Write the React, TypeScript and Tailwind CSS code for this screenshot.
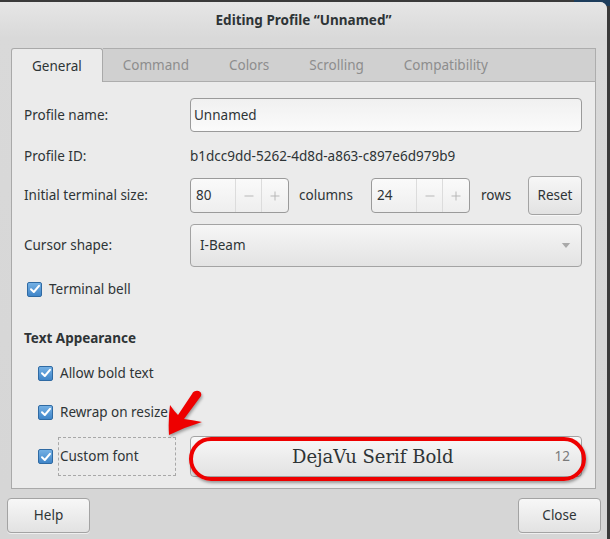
import { Minus, Plus } from "lucide-react";

const font = "font-['Noto_Sans',_'DejaVu_Sans',_sans-serif]";

const Check = ({ className = "" }: { className?: string }) => (
  <span
    className={`flex h-[15px] w-[15px] items-center justify-center rounded-[2px] border border-[#2f6aa3] bg-gradient-to-b from-[#74b0e4] to-[#3f85c8] ${className}`}
  >
    <svg viewBox="0 0 12 12" className="h-[12px] w-[12px]">
      <path d="M2 6.2 L4.8 9 L10 2.8" fill="none" stroke="#fff" strokeWidth="2" strokeLinecap="round" strokeLinejoin="round" />
    </svg>
  </span>
);

const SpinBox = ({ value }: { value: string }) => (
  <div className="flex h-[35px] w-[99px] rounded-[4px] border border-[#9a9a9a] bg-gradient-to-b from-[#fafafa] to-[#eeeeee]">
    <div className="flex w-[44px] items-center pl-[5px] text-[#2e3436]">{value}</div>
    <div className="flex w-[26px] items-center justify-center border-l border-[#dcdcdc] text-[#b4b4b4]">
      <Minus className="h-[14px] w-[14px]" strokeWidth={1.6} />
    </div>
    <div className="flex flex-1 items-center justify-center border-l border-[#dcdcdc] text-[#b4b4b4]">
      <Plus className="h-[14px] w-[14px]" strokeWidth={1.6} />
    </div>
  </div>
);

const Button = ({ label, className = "" }: { label: string; className?: string }) => (
  <div
    className={`flex items-center justify-center rounded-[4px] border border-[#a3a3a3] bg-gradient-to-b from-[#f7f7f7] to-[#e2e2e2] text-[13.5px] text-[#2e3436] shadow-[0_1px_0_rgba(255,255,255,0.6)] ${className}`}
  >
    {label}
  </div>
);

export default function App() {
  const tabs = ["Command", "Colors", "Scrolling", "Compatibility"];

  return (
    <div className={`relative h-[539px] w-[610px] overflow-hidden bg-[#3a3a3a] ${font}`}>
      {/* desktop behind the corner */}
      <div className="absolute right-0 top-0 h-[6px] w-[36px] bg-[#1d3d5c]" />

      <div className="relative mt-[2px] flex h-[537px] w-[607px] flex-col rounded-tr-[7px] bg-[#d6d6d6]">
        {/* Title bar */}
        <div className="flex h-[36px] items-center justify-center rounded-tr-[7px] bg-gradient-to-b from-[#e6e6e6] to-[#d9d9d9] text-[13.5px] font-bold text-[#2e3436]">
          Editing Profile “Unnamed”
        </div>

        {/* Notebook */}
        <div className="flex flex-col bg-gradient-to-b from-[#d9d9d9] to-[#d6d6d6] px-[11px] pt-[10px]">
          <div className="flex h-[34px]">
            <div className="flex items-center rounded-t-[3px] border-l border-r border-t border-[#a9a9a9] bg-[#ebebeb] px-5 pt-[2px] text-[13.5px] text-[#2e3436]">
              General
            </div>
            <div className="flex flex-1 border-b border-r border-t border-[#adadad] bg-[#d0d0d0]">
              {tabs.map((t) => (
                <div key={t} className="flex items-center px-5 pt-[1px] text-[13.5px] text-[#8d8d8d]">
                  {t}
                </div>
              ))}
            </div>
          </div>

          <div className="relative flex h-[407px] flex-col border-b border-l border-r border-[#a9a9a9] bg-[#ebebeb] pl-[12px] pr-[13px] text-[13.5px] text-[#2e3436]">
            {/* Profile name */}
            <div className="mt-[16px] flex h-[34px] items-center">
              <div className="w-[166px]">Profile name:</div>
              <div className="flex h-[34px] flex-1 items-center rounded-[4px] border border-[#9a9a9a] bg-gradient-to-b from-[#f0f0f0] to-[#fbfbfb] pl-[3px]">
                Unnamed
              </div>
            </div>

            {/* Profile ID */}
            <div className="mt-[7px] flex h-[34px] items-center">
              <div className="w-[166px]">Profile ID:</div>
              <div>b1dcc9dd-5262-4d8d-a863-c897e6d979b9</div>
            </div>

            {/* Initial size */}
            <div className="mt-[3px] flex h-[39px] items-center">
              <div className="w-[166px]">Initial terminal size:</div>
              <SpinBox value="80" />
              <div className="ml-[10px] w-[72px]">columns</div>
              <SpinBox value="24" />
              <div className="ml-[11px]">rows</div>
              <Button label="Reset" className="ml-auto h-[39px] w-[54px]" />
            </div>

            {/* Cursor shape */}
            <div className="mt-[9px] flex h-[43px] items-center">
              <div className="w-[166px]">Cursor shape:</div>
              <div className="flex h-[43px] flex-1 items-center justify-between rounded-[4px] border border-[#a3a3a3] bg-gradient-to-b from-[#f6f6f6] to-[#e3e3e3] pl-[9px] pr-[10px]">
                <span>I-Beam</span>
                <svg viewBox="0 0 10 6" className="h-[5px] w-[10px]">
                  <path d="M0 0 L10 0 L5 6 Z" fill="#a9a9a9" />
                </svg>
              </div>
            </div>

            {/* Terminal bell */}
            <div className="mt-[12px] flex h-[20px] items-center gap-[7px] pl-[3px]">
              <Check />
              <span>Terminal bell</span>
            </div>

            {/* Text appearance */}
            <div className="mt-[29px] flex h-[20px] items-center font-bold">Text Appearance</div>

            <div className="mt-[15px] flex h-[20px] items-center gap-[7px] pl-[14px]">
              <Check />
              <span>Allow bold text</span>
            </div>

            <div className="mt-[19px] flex h-[20px] items-center gap-[7px] pl-[14px]">
              <Check />
              <span>Rewrap on resize</span>
            </div>

            <div className="mt-[14px] flex h-[41px] items-center pl-[14px]">
              <Check />
              <div className="ml-[5px] flex h-[39px] w-[118px] items-center border border-dashed border-[#a8a8a8] pl-[1px]">
                Custom font
              </div>
              <div className="ml-[14px] flex h-[41px] flex-1 items-center rounded-[4px] border border-[#a3a3a3] bg-gradient-to-b from-[#f8f8f8] to-[#e2e2e2]">
                <span className="flex-1 text-center font-['DejaVu_Serif',_serif] text-[18px] text-[#2e3436]">
                  DejaVu Serif Bold
                </span>
                <span className="pr-[11px] text-[#7a7a7a]">12</span>
              </div>
            </div>

            {/* annotation: red outline around font button */}
            <div className="pointer-events-none absolute left-[177px] top-[355px] h-[44px] w-[397px] rounded-full border-[4px] border-[#ee0000] shadow-[1px_2px_3px_rgba(0,0,0,0.35)]" />

            {/* annotation: red arrow */}
            <svg
              className="pointer-events-none absolute left-[148px] top-[307px] h-[50px] w-[48px]"
              viewBox="0 0 48 50"
            >
              <path
                d="M32 5 C34 0 43 1 41 7 L24 30 Q32 31 42 33 Q25 38 9 46 Q8 32 10 16 Q14 22 18 26 Z"
                fill="#ee0000"
                style={{ filter: "drop-shadow(1px 2px 1.5px rgba(0,0,0,0.35))" }}
              />
            </svg>
          </div>
        </div>

        {/* Bottom buttons */}
        <div className="mt-[9px] flex justify-between pl-[7px] pr-[6px]">
          <Button label="Help" className="h-[35px] w-[83px]" />
          <Button label="Close" className="h-[35px] w-[83px]" />
        </div>
      </div>
    </div>
  );
}
